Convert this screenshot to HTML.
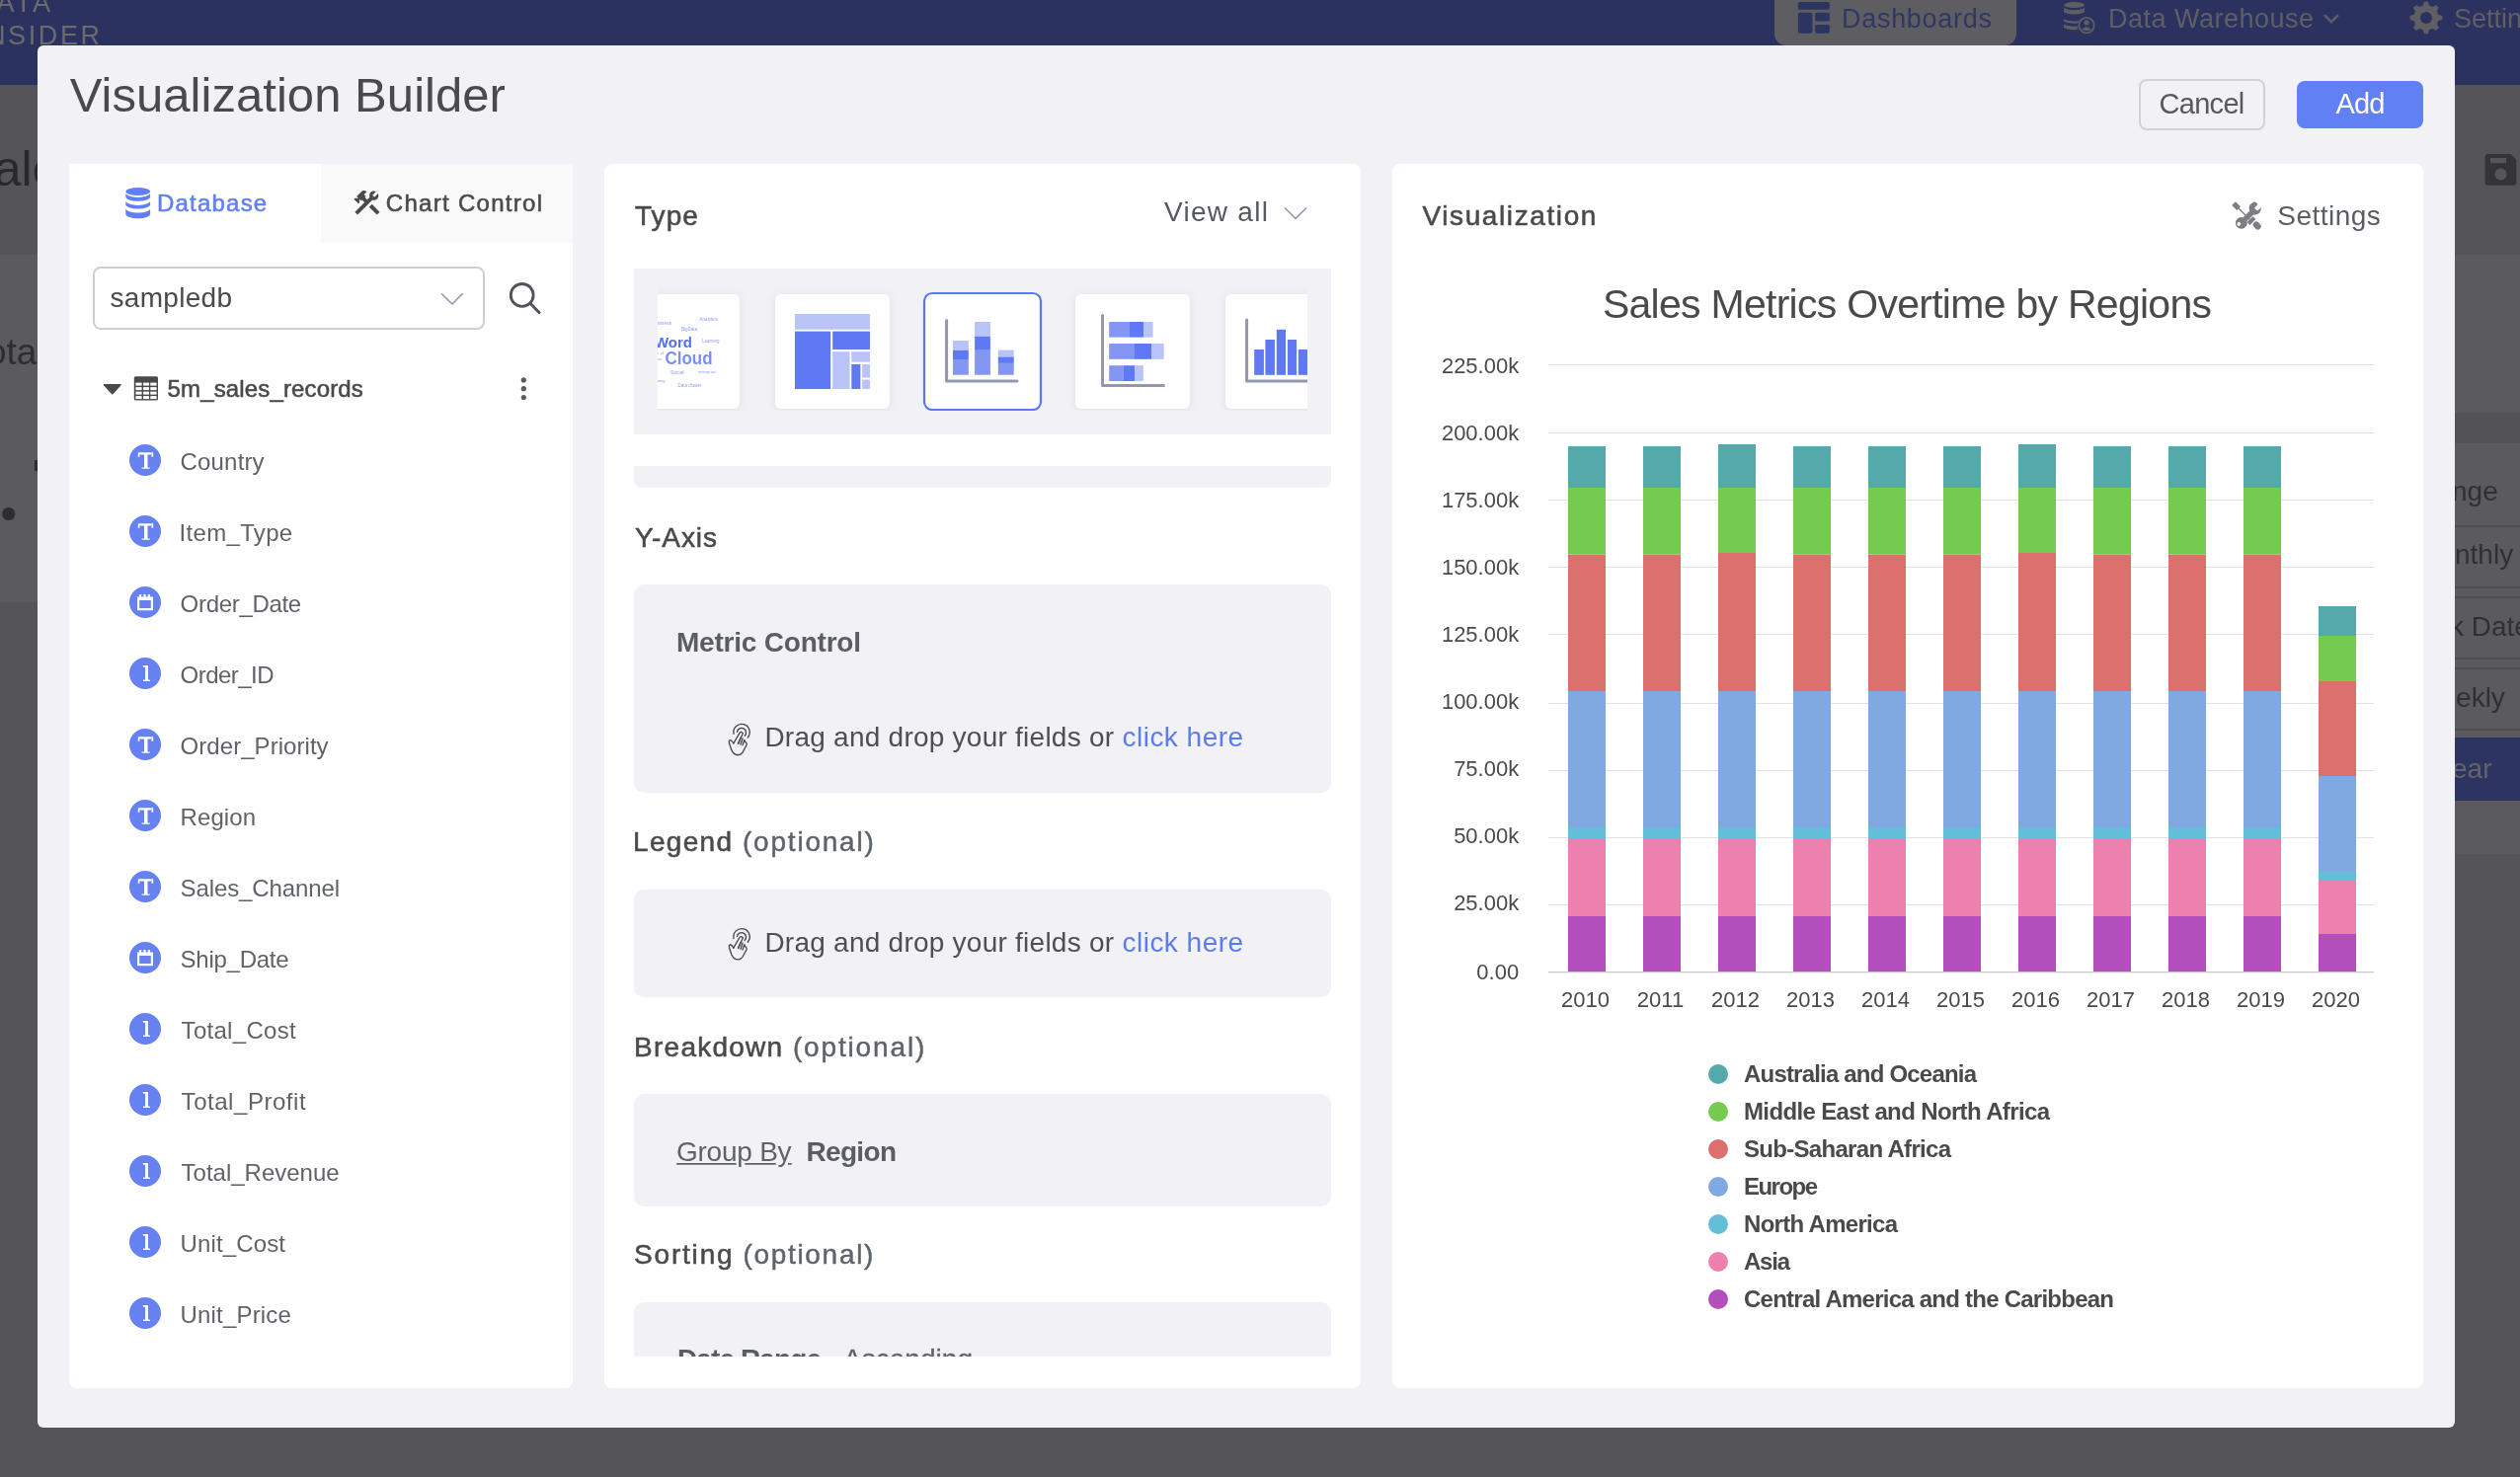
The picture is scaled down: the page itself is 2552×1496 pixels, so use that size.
<!DOCTYPE html>
<html><head><meta charset="utf-8"><title>Visualization Builder</title>
<style>
html,body{margin:0;padding:0;}
body{width:2552px;height:1496px;position:relative;overflow:hidden;background:#59585d;font-family:"Liberation Sans",sans-serif;}
svg text{font-family:"Liberation Sans",sans-serif;}
</style></head><body>
<div style="position:absolute;left:0px;top:86px;width:2552px;height:1410px;background:#555459;border-radius:0px;"></div>
<div style="position:absolute;left:0px;top:258px;width:38px;height:352px;background:#5b5a5f;border-radius:0px;"></div>
<div style="position:absolute;left:2486px;top:258px;width:66px;height:607px;background:#5b5a5f;border-radius:0px;"></div>
<div style="position:absolute;left:2486px;top:418px;width:66px;height:31px;background:#535257;border-radius:0px;"></div>
<div style="position:absolute;left:0px;top:1446px;width:2552px;height:50px;background:#545358;border-radius:0px;"></div>
<div style="position:absolute;left:0px;top:0px;width:2552px;height:86px;background:#2b3260;border-radius:0px;"></div>
<div style="position:absolute;left:1797px;top:-20px;width:245px;height:66px;background:#5e5e62;border-radius:12px;"></div>
<div style="position:absolute;left:2486px;top:532px;width:66px;height:2px;background:#4f4e53;border-radius:0px;"></div>
<div style="position:absolute;left:2486px;top:594px;width:66px;height:2px;background:#4f4e53;border-radius:0px;"></div>
<div style="position:absolute;left:2486px;top:604px;width:66px;height:2px;background:#4f4e53;border-radius:0px;"></div>
<div style="position:absolute;left:2486px;top:666px;width:66px;height:2px;background:#4f4e53;border-radius:0px;"></div>
<div style="position:absolute;left:2486px;top:676px;width:66px;height:2px;background:#4f4e53;border-radius:0px;"></div>
<div style="position:absolute;left:2486px;top:738px;width:66px;height:2px;background:#4f4e53;border-radius:0px;"></div>
<div style="position:absolute;left:2486px;top:747px;width:66px;height:64px;background:#2d3461;border-radius:0px;"></div>
<svg width="2552" height="1496" style="position:absolute;left:0;top:0;will-change:transform"><text x="-39.6" y="188" font-size="50" fill="#29292c" >Sales</text>
<text x="-14" y="369" font-size="37" fill="#2e2e30" >ota</text>
<text x="2483" y="507" font-size="28" fill="#2f3033" >nge</text>
<text x="2486" y="571" font-size="28" fill="#2f3033" >nthly</text>
<text x="2481" y="644" font-size="28" fill="#2f3033" >k Date</text>
<text x="2471.5" y="716" font-size="28" fill="#2f3033" >eekly</text>
<text x="2483" y="788" font-size="28" fill="#64646a" >ear</text>
<circle cx="8.7" cy="520.5" r="6.6" fill="#2e2e30"/>
<rect x="35" y="466" width="3" height="11" fill="#2e2e30"/>
<path d="M2519.6 156 H2542.6 L2548.3 161.7 V184.8 Q2548.3 187.8 2545.3 187.8 H2519.6 Q2516.6 187.8 2516.6 184.8 V159 Q2516.6 156 2519.6 156Z" fill="#333338"/>
<rect x="2521.9" y="160" width="16.1" height="5.2" fill="#56555a"/>
<circle cx="2532.5" cy="176.6" r="6" fill="#56555a"/></svg>
<div style="position:absolute;left:38px;top:46px;width:2448px;height:1400px;background:#f2f1f6;border-radius:6px;"></div>
<div style="position:absolute;left:70px;top:166px;width:510px;height:1240px;background:#ffffff;border-radius:0px;border-radius:0 0 8px 8px;"></div>
<div style="position:absolute;left:325px;top:166px;width:255px;height:80px;background:#f9f9fa;border-radius:0px;"></div>
<div style="position:absolute;left:94px;top:270px;width:397px;height:64px;background:#ffffff;border-radius:8px;box-sizing:border-box;border:2px solid #cfcfd1;"></div>
<div style="position:absolute;left:2166px;top:80px;width:128px;height:52px;background:transparent;border-radius:8px;box-sizing:border-box;border:2px solid #d2d2d2;"></div>
<div style="position:absolute;left:2326px;top:82px;width:128px;height:48px;background:#6080f4;border-radius:8px;"></div>
<div style="position:absolute;left:612px;top:166px;width:766px;height:1240px;background:#ffffff;border-radius:8px;"></div>
<div style="position:absolute;left:642px;top:272px;width:706px;height:168px;background:#f2f1f6;border-radius:0px;"></div>
<div style="position:absolute;left:642px;top:472px;width:706px;height:22px;background:#f2f1f6;border-radius:0px;border-radius:0 0 8px 8px;"></div>
<div style="position:absolute;left:642px;top:592px;width:706px;height:211px;background:#f2f1f6;border-radius:10px;"></div>
<div style="position:absolute;left:642px;top:901px;width:706px;height:109px;background:#f2f1f6;border-radius:10px;"></div>
<div style="position:absolute;left:642px;top:1108px;width:706px;height:114px;background:#f2f1f6;border-radius:10px;"></div>
<div style="position:absolute;left:642px;top:1319px;width:706px;height:55px;background:#f2f1f6;border-radius:0px;border-radius:10px 10px 0 0;"></div>
<div style="position:absolute;left:1410px;top:166px;width:1044px;height:1240px;background:#ffffff;border-radius:8px;"></div>
<svg width="2552" height="1496" viewBox="0 0 2552 1496" style="position:absolute;left:0;top:0;will-change:transform">
<text x="-26" y="12" font-size="27" fill="#6b6b6e" letter-spacing="3">DATA</text>
<text x="-14" y="45" font-size="27" fill="#6b6b6e" letter-spacing="2.6">NSIDER</text>
<text x="1865" y="28" font-size="27" fill="#2f3766" textLength="152" lengthAdjust="spacing" >Dashboards</text>
<text x="2135" y="28" font-size="27" fill="#5f5f63" textLength="208" lengthAdjust="spacing" >Data Warehouse</text>
<text x="2485" y="28" font-size="27" fill="#5f5f63" >Settings</text>
<text id="title" x="70.7" y="113" font-size="49" fill="#4a4a4a" textLength="441.2" lengthAdjust="spacing" >Visualization Builder</text>
<text id="cancel" x="2186.5" y="115" font-size="29" fill="#55585d" textLength="86.8" lengthAdjust="spacing" >Cancel</text>
<text id="add" x="2365.4" y="115" font-size="29" fill="#ffffff" textLength="50.1" lengthAdjust="spacing" >Add</text>
<text id="database" x="158.9" y="214" font-size="24" fill="#6380f0" textLength="111.3" lengthAdjust="spacing" stroke="#6380f0" stroke-width="0.55" >Database</text>
<text id="chartctl" x="390.8" y="214" font-size="24" fill="#4a4a4a" textLength="158.2" lengthAdjust="spacing" stroke="#4a4a4a" stroke-width="0.55" >Chart Control</text>
<text id="sampledb" x="111.5" y="311" font-size="28" fill="#4a4a4a" textLength="123.5" lengthAdjust="spacing" >sampledb</text>
<text id="tablename" x="169.5" y="402" font-size="24" fill="#4a4a4a" textLength="198.3" lengthAdjust="spacing" stroke="#4a4a4a" stroke-width="0.55" >5m_sales_records</text>
<text id="f_Country" x="182.6" y="476" font-size="24" fill="#5f6368" textLength="85.0" lengthAdjust="spacing" >Country</text>
<text id="f_Item_Type" x="181.6" y="548" font-size="24" fill="#5f6368" textLength="114.6" lengthAdjust="spacing" >Item_Type</text>
<text id="f_Order_Date" x="182.6" y="620" font-size="24" fill="#5f6368" textLength="122.6" lengthAdjust="spacing" >Order_Date</text>
<text id="f_Order_ID" x="182.6" y="692" font-size="24" fill="#5f6368" textLength="95.0" lengthAdjust="spacing" >Order_ID</text>
<text id="f_Order_Priority" x="182.6" y="764" font-size="24" fill="#5f6368" textLength="150.0" lengthAdjust="spacing" >Order_Priority</text>
<text id="f_Region" x="182.6" y="836" font-size="24" fill="#5f6368" textLength="76.4" lengthAdjust="spacing" >Region</text>
<text id="f_Sales_Channel" x="182.6" y="908" font-size="24" fill="#5f6368" textLength="161.4" lengthAdjust="spacing" >Sales_Channel</text>
<text id="f_Ship_Date" x="182.6" y="980" font-size="24" fill="#5f6368" textLength="110.0" lengthAdjust="spacing" >Ship_Date</text>
<text id="f_Total_Cost" x="183.6" y="1052" font-size="24" fill="#5f6368" textLength="116.0" lengthAdjust="spacing" >Total_Cost</text>
<text id="f_Total_Profit" x="183.6" y="1124" font-size="24" fill="#5f6368" textLength="126.0" lengthAdjust="spacing" >Total_Profit</text>
<text id="f_Total_Revenue" x="183.6" y="1196" font-size="24" fill="#5f6368" textLength="160.0" lengthAdjust="spacing" >Total_Revenue</text>
<text id="f_Unit_Cost" x="182.6" y="1268" font-size="24" fill="#5f6368" textLength="106.4" lengthAdjust="spacing" >Unit_Cost</text>
<text id="f_Unit_Price" x="182.6" y="1340" font-size="24" fill="#5f6368" textLength="112.2" lengthAdjust="spacing" >Unit_Price</text>
<text id="type" x="643.0" y="228" font-size="28" fill="#4a4a4a" textLength="63.9" lengthAdjust="spacing" stroke="#4a4a4a" stroke-width="0.55" >Type</text>
<text id="viewall" x="1179.0" y="224" font-size="28" fill="#55585e" textLength="104.9" lengthAdjust="spacing" >View all</text>
<text id="yaxis" x="643.0" y="553.5" font-size="28" fill="#4a4a4a" textLength="83.0" lengthAdjust="spacing" stroke="#4a4a4a" stroke-width="0.55" >Y-Axis</text>
<text id="metric" x="685.0" y="660" font-size="28" fill="#5a5d63" font-weight="700" textLength="187.0" lengthAdjust="spacing" >Metric Control</text>
<text id="drag0" x="774.4" y="756.4" font-size="28" fill="#4f4f4f" textLength="353.7" lengthAdjust="spacing" >Drag and drop your fields or</text>
<text id="click0" x="1136.5" y="756.4" font-size="28" fill="#5b7cf0" textLength="122.6" lengthAdjust="spacing" >click here</text>
<text id="drag1" x="774.4" y="963.6" font-size="28" fill="#4f4f4f" textLength="353.7" lengthAdjust="spacing" >Drag and drop your fields or</text>
<text id="click1" x="1136.5" y="963.6" font-size="28" fill="#5b7cf0" textLength="122.6" lengthAdjust="spacing" >click here</text>
<text id="legend" x="641.0" y="862" font-size="28" fill="#4a4a4a" textLength="100.0" lengthAdjust="spacing" stroke="#4a4a4a" stroke-width="0.55" >Legend</text>
<text id="legopt" x="752.0" y="862" font-size="28" fill="#5f6368" textLength="132.8" lengthAdjust="spacing" stroke="#5f6368" stroke-width="0.45" >(optional)</text>
<text id="breakdown" x="642.1" y="1069.5" font-size="28" fill="#4a4a4a" textLength="150.0" lengthAdjust="spacing" stroke="#4a4a4a" stroke-width="0.55" >Breakdown</text>
<text id="bdopt" x="802.9" y="1069.5" font-size="28" fill="#5f6368" textLength="133.4" lengthAdjust="spacing" stroke="#5f6368" stroke-width="0.45" >(optional)</text>
<text id="groupby" x="685.0" y="1175.7" font-size="28" fill="#5f6368" textLength="116.6" lengthAdjust="spacing" >Group By</text>
<path d="M685.2 1178.1 H745.7 V1179.7 H685.2Z M754.3 1178.1 H785.7 V1179.7 H754.3Z M798 1178.1 H801.7 V1179.7 H798Z" fill="#5f6368"/>
<text id="regionbd" x="816.4" y="1175.7" font-size="28" fill="#5a5d63" font-weight="700" textLength="91.6" lengthAdjust="spacing" >Region</text>
<text id="sorting" x="642.0" y="1280" font-size="28" fill="#4a4a4a" textLength="99.6" lengthAdjust="spacing" stroke="#4a4a4a" stroke-width="0.55" >Sorting</text>
<text id="sortopt" x="752.4" y="1280" font-size="28" fill="#5f6368" textLength="132.0" lengthAdjust="spacing" stroke="#5f6368" stroke-width="0.45" >(optional)</text>
<clipPath id="midclip"><rect x="612" y="166" width="766" height="1208"/></clipPath>
<g clip-path="url(#midclip)">
<text x="686" y="1386" font-size="28" fill="#5a5d63" font-weight="700" textLength="146" lengthAdjust="spacing" >Date Range</text>
<text x="854" y="1386" font-size="28" fill="#5f6368" textLength="131" lengthAdjust="spacing" stroke="#5f6368" stroke-width="0.3" >Ascending</text>
</g>
<text id="visualization" x="1440.5" y="228" font-size="28" fill="#4a4a4a" textLength="175.9" lengthAdjust="spacing" stroke="#4a4a4a" stroke-width="0.55" >Visualization</text>
<text id="settings" x="2306.3" y="228" font-size="28" fill="#5a5d63" textLength="104.5" lengthAdjust="spacing" >Settings</text>
<text id="charttitle" x="1622.9" y="322" font-size="41" fill="#4a4a4a" textLength="617.1" lengthAdjust="spacing" >Sales Metrics Overtime by Regions</text>
<rect x="1568" y="984" width="836" height="1" fill="#cbcbcb"/>
<rect x="1568" y="985" width="836" height="0.6" fill="#e6e6e6"/>
<text x="1538.2" y="991.8" font-size="22" fill="#4a4a4a" text-anchor="end" >0.00</text>
<rect x="1568" y="916" width="836" height="1" fill="#e1e1e1"/>
<text x="1538.2" y="922.1" font-size="22" fill="#4a4a4a" text-anchor="end" >25.00k</text>
<rect x="1568" y="848" width="836" height="1" fill="#e1e1e1"/>
<text x="1538.2" y="853.9" font-size="22" fill="#4a4a4a" text-anchor="end" >50.00k</text>
<rect x="1568" y="780" width="836" height="1" fill="#e1e1e1"/>
<text x="1538.2" y="786" font-size="22" fill="#4a4a4a" text-anchor="end" >75.00k</text>
<rect x="1568" y="712" width="836" height="1" fill="#e1e1e1"/>
<text x="1538.2" y="718" font-size="22" fill="#4a4a4a" text-anchor="end" >100.00k</text>
<rect x="1568" y="642" width="836" height="1" fill="#e1e1e1"/>
<text x="1538.2" y="649.7" font-size="22" fill="#4a4a4a" text-anchor="end" >125.00k</text>
<rect x="1568" y="574" width="836" height="1" fill="#e1e1e1"/>
<text x="1538.2" y="581.9" font-size="22" fill="#4a4a4a" text-anchor="end" >150.00k</text>
<rect x="1568" y="506" width="836" height="1" fill="#e1e1e1"/>
<text x="1538.2" y="514" font-size="22" fill="#4a4a4a" text-anchor="end" >175.00k</text>
<rect x="1568" y="438" width="836" height="1" fill="#e1e1e1"/>
<text x="1538.2" y="446" font-size="22" fill="#4a4a4a" text-anchor="end" >200.00k</text>
<rect x="1568" y="369" width="836" height="1" fill="#e1e1e1"/>
<text x="1538.2" y="377.9" font-size="22" fill="#4a4a4a" text-anchor="end" >225.00k</text>
<rect x="1588" y="928" width="38" height="56.0" fill="#b24fbd"/>
<rect x="1588" y="850" width="38" height="78.0" fill="#ee80ae"/>
<rect x="1588" y="838" width="38" height="12.0" fill="#63bfd8"/>
<rect x="1588" y="700" width="38" height="138.0" fill="#80a9e1"/>
<rect x="1588" y="561.5" width="38" height="138.5" fill="#db706c"/>
<rect x="1588" y="494" width="38" height="67.5" fill="#74cb50"/>
<rect x="1588" y="452" width="38" height="42.0" fill="#55a9aa"/>
<text x="1605.5" y="1020" font-size="22" fill="#4a4a4a" text-anchor="middle" >2010</text>
<rect x="1664" y="928" width="38" height="56.0" fill="#b24fbd"/>
<rect x="1664" y="850" width="38" height="78.0" fill="#ee80ae"/>
<rect x="1664" y="838" width="38" height="12.0" fill="#63bfd8"/>
<rect x="1664" y="700" width="38" height="138.0" fill="#80a9e1"/>
<rect x="1664" y="561.5" width="38" height="138.5" fill="#db706c"/>
<rect x="1664" y="494" width="38" height="67.5" fill="#74cb50"/>
<rect x="1664" y="452" width="38" height="42.0" fill="#55a9aa"/>
<text x="1681.5" y="1020" font-size="22" fill="#4a4a4a" text-anchor="middle" >2011</text>
<rect x="1740" y="928" width="38" height="56.0" fill="#b24fbd"/>
<rect x="1740" y="850" width="38" height="78.0" fill="#ee80ae"/>
<rect x="1740" y="838" width="38" height="12.0" fill="#63bfd8"/>
<rect x="1740" y="700" width="38" height="138.0" fill="#80a9e1"/>
<rect x="1740" y="560" width="38" height="140.0" fill="#db706c"/>
<rect x="1740" y="494" width="38" height="66.0" fill="#74cb50"/>
<rect x="1740" y="450" width="38" height="44.0" fill="#55a9aa"/>
<text x="1757.5" y="1020" font-size="22" fill="#4a4a4a" text-anchor="middle" >2012</text>
<rect x="1816" y="928" width="38" height="56.0" fill="#b24fbd"/>
<rect x="1816" y="850" width="38" height="78.0" fill="#ee80ae"/>
<rect x="1816" y="838" width="38" height="12.0" fill="#63bfd8"/>
<rect x="1816" y="700" width="38" height="138.0" fill="#80a9e1"/>
<rect x="1816" y="561.5" width="38" height="138.5" fill="#db706c"/>
<rect x="1816" y="494" width="38" height="67.5" fill="#74cb50"/>
<rect x="1816" y="452" width="38" height="42.0" fill="#55a9aa"/>
<text x="1833.5" y="1020" font-size="22" fill="#4a4a4a" text-anchor="middle" >2013</text>
<rect x="1892" y="928" width="38" height="56.0" fill="#b24fbd"/>
<rect x="1892" y="850" width="38" height="78.0" fill="#ee80ae"/>
<rect x="1892" y="838" width="38" height="12.0" fill="#63bfd8"/>
<rect x="1892" y="700" width="38" height="138.0" fill="#80a9e1"/>
<rect x="1892" y="561.5" width="38" height="138.5" fill="#db706c"/>
<rect x="1892" y="494" width="38" height="67.5" fill="#74cb50"/>
<rect x="1892" y="452" width="38" height="42.0" fill="#55a9aa"/>
<text x="1909.5" y="1020" font-size="22" fill="#4a4a4a" text-anchor="middle" >2014</text>
<rect x="1968" y="928" width="38" height="56.0" fill="#b24fbd"/>
<rect x="1968" y="850" width="38" height="78.0" fill="#ee80ae"/>
<rect x="1968" y="838" width="38" height="12.0" fill="#63bfd8"/>
<rect x="1968" y="700" width="38" height="138.0" fill="#80a9e1"/>
<rect x="1968" y="561.5" width="38" height="138.5" fill="#db706c"/>
<rect x="1968" y="494" width="38" height="67.5" fill="#74cb50"/>
<rect x="1968" y="452" width="38" height="42.0" fill="#55a9aa"/>
<text x="1985.5" y="1020" font-size="22" fill="#4a4a4a" text-anchor="middle" >2015</text>
<rect x="2044" y="928" width="38" height="56.0" fill="#b24fbd"/>
<rect x="2044" y="850" width="38" height="78.0" fill="#ee80ae"/>
<rect x="2044" y="838" width="38" height="12.0" fill="#63bfd8"/>
<rect x="2044" y="700" width="38" height="138.0" fill="#80a9e1"/>
<rect x="2044" y="560" width="38" height="140.0" fill="#db706c"/>
<rect x="2044" y="494" width="38" height="66.0" fill="#74cb50"/>
<rect x="2044" y="450" width="38" height="44.0" fill="#55a9aa"/>
<text x="2061.5" y="1020" font-size="22" fill="#4a4a4a" text-anchor="middle" >2016</text>
<rect x="2120" y="928" width="38" height="56.0" fill="#b24fbd"/>
<rect x="2120" y="850" width="38" height="78.0" fill="#ee80ae"/>
<rect x="2120" y="838" width="38" height="12.0" fill="#63bfd8"/>
<rect x="2120" y="700" width="38" height="138.0" fill="#80a9e1"/>
<rect x="2120" y="561.5" width="38" height="138.5" fill="#db706c"/>
<rect x="2120" y="494" width="38" height="67.5" fill="#74cb50"/>
<rect x="2120" y="452" width="38" height="42.0" fill="#55a9aa"/>
<text x="2137.5" y="1020" font-size="22" fill="#4a4a4a" text-anchor="middle" >2017</text>
<rect x="2196" y="928" width="38" height="56.0" fill="#b24fbd"/>
<rect x="2196" y="850" width="38" height="78.0" fill="#ee80ae"/>
<rect x="2196" y="838" width="38" height="12.0" fill="#63bfd8"/>
<rect x="2196" y="700" width="38" height="138.0" fill="#80a9e1"/>
<rect x="2196" y="561.5" width="38" height="138.5" fill="#db706c"/>
<rect x="2196" y="494" width="38" height="67.5" fill="#74cb50"/>
<rect x="2196" y="452" width="38" height="42.0" fill="#55a9aa"/>
<text x="2213.5" y="1020" font-size="22" fill="#4a4a4a" text-anchor="middle" >2018</text>
<rect x="2272" y="928" width="38" height="56.0" fill="#b24fbd"/>
<rect x="2272" y="850" width="38" height="78.0" fill="#ee80ae"/>
<rect x="2272" y="838" width="38" height="12.0" fill="#63bfd8"/>
<rect x="2272" y="700" width="38" height="138.0" fill="#80a9e1"/>
<rect x="2272" y="561.5" width="38" height="138.5" fill="#db706c"/>
<rect x="2272" y="494" width="38" height="67.5" fill="#74cb50"/>
<rect x="2272" y="452" width="38" height="42.0" fill="#55a9aa"/>
<text x="2289.5" y="1020" font-size="22" fill="#4a4a4a" text-anchor="middle" >2019</text>
<rect x="2348" y="946" width="38" height="38.0" fill="#b24fbd"/>
<rect x="2348" y="892" width="38" height="54.0" fill="#ee80ae"/>
<rect x="2348" y="883" width="38" height="9.0" fill="#63bfd8"/>
<rect x="2348" y="786" width="38" height="97.0" fill="#80a9e1"/>
<rect x="2348" y="690" width="38" height="96.0" fill="#db706c"/>
<rect x="2348" y="644" width="38" height="46.0" fill="#74cb50"/>
<rect x="2348" y="614" width="38" height="30.0" fill="#55a9aa"/>
<text x="2365.5" y="1020" font-size="22" fill="#4a4a4a" text-anchor="middle" >2020</text>
<circle cx="1740" cy="1088" r="10" fill="#55a9aa"/>
<text x="1766" y="1095.5" font-size="24" fill="#4a4a4a" font-weight="700" textLength="236" lengthAdjust="spacing" >Australia and Oceania</text>
<circle cx="1740" cy="1126" r="10" fill="#74cb50"/>
<text x="1766" y="1133.5" font-size="24" fill="#4a4a4a" font-weight="700" textLength="310" lengthAdjust="spacing" >Middle East and North Africa</text>
<circle cx="1740" cy="1164" r="10" fill="#db706c"/>
<text x="1766" y="1171.5" font-size="24" fill="#4a4a4a" font-weight="700" textLength="210" lengthAdjust="spacing" >Sub-Saharan Africa</text>
<circle cx="1740" cy="1202" r="10" fill="#80a9e1"/>
<text x="1766" y="1209.5" font-size="24" fill="#4a4a4a" font-weight="700" textLength="75" lengthAdjust="spacing" >Europe</text>
<circle cx="1740" cy="1240" r="10" fill="#63bfd8"/>
<text x="1766" y="1247.5" font-size="24" fill="#4a4a4a" font-weight="700" textLength="156" lengthAdjust="spacing" >North America</text>
<circle cx="1740" cy="1278" r="10" fill="#ee80ae"/>
<text x="1766" y="1285.5" font-size="24" fill="#4a4a4a" font-weight="700" textLength="47" lengthAdjust="spacing" >Asia</text>
<circle cx="1740" cy="1316" r="10" fill="#b24fbd"/>
<text x="1766" y="1323.5" font-size="24" fill="#4a4a4a" font-weight="700" textLength="375" lengthAdjust="spacing" >Central America and the Caribbean</text>
<g transform="translate(127.3,190)" fill="#6080f3">
<ellipse cx="12.4" cy="4" rx="12.4" ry="4"/>
<path d="M0 5.3 V9.5 A12.4 4.2 0 0 0 24.8 9.5 V5.3 A12.4 4.6 0 0 1 0 5.3Z"/>
<path d="M0 13.3 V17.3 A12.4 4.2 0 0 0 24.8 17.3 V13.3 A12.4 4.6 0 0 1 0 13.3Z"/>
<path d="M0 21.0 V27 A12.4 4.2 0 0 0 24.8 27 V21.0 A12.4 4.6 0 0 1 0 21.0Z"/>
</g>
<g transform="translate(355.6,189.6) scale(1.32)" fill="#4a4a4a"><path d="M13.783 15.172l2.121-2.121 5.996 5.996-2.121 2.121zM17.5 10c1.93 0 3.5-1.57 3.5-3.5 0-.58-.16-1.12-.41-1.6l-2.7 2.7-1.49-1.49 2.7-2.7c-.48-.25-1.02-.41-1.6-.41C15.57 3 14 4.57 14 6.5c0 .41.08.8.21 1.160l-1.85 1.85-1.78-1.78.71-.71-1.410-1.41L12 3.49c-1.17-1.17-3.07-1.17-4.24 0L4.22 7.03l1.41 1.41H2.81l-.71.71 3.54 3.54.71-.71V9.15l1.41 1.41.71-.71 1.78 1.78-7.41 7.41 2.12 2.12L16.34 9.79c.36.13.75.21 1.16.21z"/></g>
<path d="M447.6 297.8 L458 308 L468.2 297.6" fill="none" stroke="#9a9cb4" stroke-width="1.7" stroke-linecap="round" stroke-linejoin="round"/>
<circle cx="528.7" cy="298.9" r="11.4" fill="none" stroke="#50535a" stroke-width="2.8"/>
<path d="M537.4 307.8 L546 316.6" stroke="#50535a" stroke-width="2.9" stroke-linecap="round"/>
<path d="M105.5 389.7 H122 L113.75 398.6Z" fill="#4a4a4a" stroke="#4a4a4a" stroke-width="1.6" stroke-linejoin="round"/>
<rect x="135.8" y="381.3" width="24.2" height="24.2" rx="1.5" fill="#4a4a4a"/>
<rect x="137.4" y="387.6" width="6.2" height="3.0" fill="#ffffff"/>
<rect x="137.4" y="392.1" width="6.2" height="3.0" fill="#ffffff"/>
<rect x="137.4" y="396.6" width="6.2" height="3.0" fill="#ffffff"/>
<rect x="137.4" y="401.1" width="6.2" height="3.0" fill="#ffffff"/>
<rect x="145.1" y="387.6" width="5.9" height="3.0" fill="#ffffff"/>
<rect x="145.1" y="392.1" width="5.9" height="3.0" fill="#ffffff"/>
<rect x="145.1" y="396.6" width="5.9" height="3.0" fill="#ffffff"/>
<rect x="145.1" y="401.1" width="5.9" height="3.0" fill="#ffffff"/>
<rect x="152.3" y="387.6" width="6.3" height="3.0" fill="#ffffff"/>
<rect x="152.3" y="392.1" width="6.3" height="3.0" fill="#ffffff"/>
<rect x="152.3" y="396.6" width="6.3" height="3.0" fill="#ffffff"/>
<rect x="152.3" y="401.1" width="6.3" height="3.0" fill="#ffffff"/>
<circle cx="530.3" cy="384.9" r="2.6" fill="#5a5d63"/>
<circle cx="530.3" cy="393.7" r="2.6" fill="#5a5d63"/>
<circle cx="530.3" cy="402.5" r="2.6" fill="#5a5d63"/>
<circle cx="147" cy="466" r="16" fill="#6681f2"/>
<path fill="#ffffff" d="M139.8 458.3 H155.2 V462.8 H153.6 V460.4 H149.5 V473.4 H151.7 V474.8 H143.6 V473.4 H146 V460.4 H141.4 V462.8 H139.8Z"/>
<circle cx="147" cy="538" r="16" fill="#6681f2"/>
<path fill="#ffffff" d="M139.8 530.3 H155.2 V534.8 H153.6 V532.4 H149.5 V545.4 H151.7 V546.8 H143.6 V545.4 H146 V532.4 H141.4 V534.8 H139.8Z"/>
<circle cx="147" cy="610" r="16" fill="#6681f2"/>
<path fill="#ffffff" fill-rule="evenodd" d="M139 604.4 H141 V601.9 H143.2 V604.4 H145.4 V601.9 H147.6 V604.4 H149.8 V601.9 H152 V604.4 H155 V617.5 Q155 618.3 154.2 618.3 H139.8 Q139 618.3 139 617.5Z M141.2 608 V616 H152.8 V608Z"/>
<circle cx="147" cy="682" r="16" fill="#6681f2"/>
<path fill="#ffffff" d="M144.8 674 H150 V688.4 H151.8 V690 H145 V688.4 H147 V675.7 H144.8Z"/>
<circle cx="147" cy="754" r="16" fill="#6681f2"/>
<path fill="#ffffff" d="M139.8 746.3 H155.2 V750.8 H153.6 V748.4 H149.5 V761.4 H151.7 V762.8 H143.6 V761.4 H146 V748.4 H141.4 V750.8 H139.8Z"/>
<circle cx="147" cy="826" r="16" fill="#6681f2"/>
<path fill="#ffffff" d="M139.8 818.3 H155.2 V822.8 H153.6 V820.4 H149.5 V833.4 H151.7 V834.8 H143.6 V833.4 H146 V820.4 H141.4 V822.8 H139.8Z"/>
<circle cx="147" cy="898" r="16" fill="#6681f2"/>
<path fill="#ffffff" d="M139.8 890.3 H155.2 V894.8 H153.6 V892.4 H149.5 V905.4 H151.7 V906.8 H143.6 V905.4 H146 V892.4 H141.4 V894.8 H139.8Z"/>
<circle cx="147" cy="970" r="16" fill="#6681f2"/>
<path fill="#ffffff" fill-rule="evenodd" d="M139 964.4 H141 V961.9 H143.2 V964.4 H145.4 V961.9 H147.6 V964.4 H149.8 V961.9 H152 V964.4 H155 V977.5 Q155 978.3 154.2 978.3 H139.8 Q139 978.3 139 977.5Z M141.2 968 V976 H152.8 V968Z"/>
<circle cx="147" cy="1042" r="16" fill="#6681f2"/>
<path fill="#ffffff" d="M144.8 1034 H150 V1048.4 H151.8 V1050 H145 V1048.4 H147 V1035.7 H144.8Z"/>
<circle cx="147" cy="1114" r="16" fill="#6681f2"/>
<path fill="#ffffff" d="M144.8 1106 H150 V1120.4 H151.8 V1122 H145 V1120.4 H147 V1107.7 H144.8Z"/>
<circle cx="147" cy="1186" r="16" fill="#6681f2"/>
<path fill="#ffffff" d="M144.8 1178 H150 V1192.4 H151.8 V1194 H145 V1192.4 H147 V1179.7 H144.8Z"/>
<circle cx="147" cy="1258" r="16" fill="#6681f2"/>
<path fill="#ffffff" d="M144.8 1250 H150 V1264.4 H151.8 V1266 H145 V1264.4 H147 V1251.7 H144.8Z"/>
<circle cx="147" cy="1330" r="16" fill="#6681f2"/>
<path fill="#ffffff" d="M144.8 1322 H150 V1336.4 H151.8 V1338 H145 V1336.4 H147 V1323.7 H144.8Z"/>
<clipPath id="cardclip"><rect x="666" y="280" width="658" height="136"/></clipPath>
<defs><filter id="cshadow" x="-20%" y="-20%" width="140%" height="140%"><feDropShadow dx="0" dy="1" stdDeviation="4.5" flood-color="#000" flood-opacity="0.07"/></filter></defs>
<g clip-path="url(#cardclip)">
<rect x="633" y="298" width="116" height="116" rx="6" fill="#ffffff" filter="url(#cshadow)"/>
<rect x="785" y="298" width="116" height="116" rx="6" fill="#ffffff" filter="url(#cshadow)"/>
<rect x="1089" y="298" width="116" height="116" rx="6" fill="#ffffff" filter="url(#cshadow)"/>
<rect x="1241" y="298" width="116" height="116" rx="6" fill="#ffffff" filter="url(#cshadow)"/>
<rect x="936" y="297" width="118" height="118" rx="8" fill="#ffffff" stroke="#5a78f5" stroke-width="2.2"/>
<text x="701" y="352" font-size="15" font-weight="700" fill="#5470f0" text-anchor="end">Word</text>
<text x="673.5" y="369" font-size="19" font-weight="700" fill="#7a90f0" textLength="48" lengthAdjust="spacingAndGlyphs">Cloud</text>
<text x="666" y="328.5" font-size="5" fill="#8a9cf2">siness</text>
<text x="708.5" y="325" font-size="4.6" fill="#8a9cf2">Analytics</text>
<text x="690" y="335" font-size="4.5" fill="#8a9cf2">BigData</text>
<text x="711" y="346.5" font-size="4.5" fill="#8a9cf2">Learning</text>
<text x="666" y="359" font-size="4" fill="#8a9cf2">r of</text>
<text x="666" y="365" font-size="4" fill="#8a9cf2">on</text>
<text x="679" y="379" font-size="5" fill="#8a9cf2">Social</text>
<text x="707" y="378" font-size="4" fill="#8a9cf2">enterprise</text>
<text x="666" y="387" font-size="4" fill="#8a9cf2">ning</text>
<text x="686.5" y="391.5" font-size="4.5" fill="#8a9cf2">Data cluster</text>
<rect x="805" y="318" width="76.0" height="15.7" fill="#b9c3f7"/>
<rect x="805" y="335.6" width="36.1" height="58.4" fill="#5f78f3"/>
<rect x="843.2" y="335.6" width="37.8" height="18.4" fill="#5f78f3"/>
<rect x="843.2" y="356.2" width="17.3" height="37.8" fill="#b9c3f7"/>
<rect x="862.3" y="356.2" width="18.7" height="10.5" fill="#b9c3f7"/>
<rect x="862.3" y="369" width="9.0" height="25.0" fill="#5f78f3"/>
<rect x="873.2" y="369" width="7.8" height="13.5" fill="#b9c3f7"/>
<rect x="873.2" y="384.6" width="7.8" height="9.4" fill="#b9c3f7"/>
<path d="M958.6 324.5 V386 H1030" fill="none" stroke="#9498ac" stroke-width="3" stroke-linecap="round" stroke-linejoin="round"/>
<rect x="965" y="345" width="15.8" height="9.8" fill="#b9c3f7"/>
<rect x="965" y="354.8" width="15.8" height="9.2" fill="#5f78f3"/>
<rect x="965" y="364" width="15.8" height="15.7" fill="#8396f3"/>
<rect x="987.1" y="326" width="15.8" height="14.8" fill="#b9c3f7"/>
<rect x="987.1" y="340.8" width="15.8" height="14.0" fill="#5f78f3"/>
<rect x="987.1" y="354.8" width="15.8" height="24.9" fill="#8396f3"/>
<rect x="1010.8" y="354.6" width="15.9" height="6.9" fill="#b9c3f7"/>
<rect x="1010.8" y="361.5" width="15.9" height="6.4" fill="#5f78f3"/>
<rect x="1010.8" y="367.9" width="15.9" height="11.8" fill="#8396f3"/>
<path d="M1116.5 319.5 V390.5 H1178.5" fill="none" stroke="#9498ac" stroke-width="3" stroke-linecap="round" stroke-linejoin="round"/>
<rect x="1123.2" y="326" width="20.8" height="15.6" fill="#8396f3"/>
<rect x="1144" y="326" width="14.0" height="15.6" fill="#5f78f3"/>
<rect x="1158" y="326" width="9.6" height="15.6" fill="#b9c3f7"/>
<rect x="1123.2" y="348" width="25.8" height="15.8" fill="#8396f3"/>
<rect x="1149" y="348" width="17.0" height="15.8" fill="#5f78f3"/>
<rect x="1166" y="348" width="12.7" height="15.8" fill="#b9c3f7"/>
<rect x="1123.2" y="370.2" width="14.7" height="15.8" fill="#8396f3"/>
<rect x="1137.9" y="370.2" width="11.3" height="15.8" fill="#5f78f3"/>
<rect x="1149.2" y="370.2" width="8.6" height="15.8" fill="#b9c3f7"/>
<path d="M1262.6 324 V386 H1330" fill="none" stroke="#9498ac" stroke-width="3" stroke-linecap="round" stroke-linejoin="round"/>
<rect x="1270.2" y="354" width="9.7" height="25.8" fill="#5f78f3"/>
<rect x="1281.4" y="344" width="9.5" height="35.8" fill="#5f78f3"/>
<rect x="1292.8" y="333.8" width="9.2" height="46.0" fill="#5f78f3"/>
<rect x="1303.9" y="344" width="9.1" height="35.8" fill="#5f78f3"/>
<rect x="1314.8" y="354" width="9.2" height="25.8" fill="#5f78f3"/>
</g>
<path d="M1301.6 211 L1312.1 221.4 L1322.5 211" fill="none" stroke="#9a9cb4" stroke-width="1.7" stroke-linecap="round" stroke-linejoin="round"/>
<g transform="translate(737.6,733.4)" fill="none" stroke="#474747" stroke-width="1.35" stroke-linecap="round" stroke-linejoin="round">
<path d="M5.4 9.9 A8.2 8.2 0 1 1 19.6 13.6"/>
<path d="M8.8 7.9 A4.6 4.6 0 1 1 16.6 11.9"/>
<path d="M5.2 19.6 L11.4 8.9 Q13 6.9 14.8 9.4 L9.8 19.6"/>
<path d="M12.6 13.6 L10.2 19.9 M14.4 14.6 L12.4 20.6 M16.2 16.4 L14.4 21.4"/>
<path d="M5.2 19.6 Q3.4 16 1.6 16.2 Q0.3 16.8 0.9 19.4 L3.2 26.2 Q5.2 31.3 10 31.3 Q12.8 31.1 14.6 28.4 L18.4 21.2 Q19 19.6 17.8 18.6 Q17 18 16.2 16.4"/>
</g>
<g transform="translate(737.6,940.6)" fill="none" stroke="#474747" stroke-width="1.35" stroke-linecap="round" stroke-linejoin="round">
<path d="M5.4 9.9 A8.2 8.2 0 1 1 19.6 13.6"/>
<path d="M8.8 7.9 A4.6 4.6 0 1 1 16.6 11.9"/>
<path d="M5.2 19.6 L11.4 8.9 Q13 6.9 14.8 9.4 L9.8 19.6"/>
<path d="M12.6 13.6 L10.2 19.9 M14.4 14.6 L12.4 20.6 M16.2 16.4 L14.4 21.4"/>
<path d="M5.2 19.6 Q3.4 16 1.6 16.2 Q0.3 16.8 0.9 19.4 L3.2 26.2 Q5.2 31.3 10 31.3 Q12.8 31.1 14.6 28.4 L18.4 21.2 Q19 19.6 17.8 18.6 Q17 18 16.2 16.4"/>
</g>
<g fill="#7c7e84">
<rect x="-2.6" y="-3.6" width="5.2" height="7.2" transform="translate(2264.6,208.6) rotate(-45)"/>
<path d="M2266.5 210.5 L2279.5 223.5" stroke="#7c7e84" stroke-width="1.4"/>
<rect x="-4.2" y="-2.1" width="8.4" height="4.2" transform="translate(2280,223.6) rotate(-45)"/>
<rect x="-3.2" y="-4.2" width="6.4" height="8.6" rx="3" transform="translate(2285.6,228.4) rotate(-45)"/>
<path d="M2283.8 204.6 A6.2 6.2 0 0 0 2278.3 213.6 L2271.6 220.3 A5.9 5.9 0 1 0 2275.4 224.1 L2282.1 217.4 A6.2 6.2 0 0 0 2289.6 210.2 L2286.2 213.4 L2283.0 210.7 L2286.4 206.9 A6 6 0 0 0 2283.8 204.6Z"/>
<circle cx="2267.3" cy="226.8" r="1.9" fill="#ffffff"/>
</g>
<g fill="#2c3461">
<rect x="1820.9" y="2" width="32" height="7.7" rx="1.6"/>
<rect x="1820.9" y="12.8" width="14.5" height="20.9" rx="1.6"/>
<rect x="1838.2" y="12.8" width="14.7" height="8.8" rx="1.6"/>
<rect x="1838.2" y="25" width="14.7" height="8.7" rx="1.6"/>
</g>
<g fill="#5f5f63">
<ellipse cx="2100.5" cy="5" rx="10.5" ry="3"/>
<path d="M2090 7 V11.5 A10.5 3 0 0 0 2111 11.5 V7 A10.5 3.2 0 0 1 2090 7Z"/>
<path d="M2090 14 V18.5 A10.5 3 0 0 0 2106 21 L2104 23.5 A10.5 3 0 0 1 2090 21Z"/>
<path d="M2090 23.5 V27.5 A10.5 3 0 0 0 2103.5 30 L2104 26.5 A10.5 3 0 0 1 2090 23.5Z"/>
<circle cx="2113" cy="25.6" r="8.6"/>
</g>
<circle cx="2113" cy="25.6" r="6.8" fill="#2b3260"/>
<circle cx="2113" cy="22.8" r="2.6" fill="#5f5f63"/>
<path d="M2108.2 30 Q2113 24.6 2117.8 30 Q2113 32.6 2108.2 30Z" fill="#5f5f63"/>
<path d="M2354 15.2 L2361 22.2 L2368 15.2" fill="none" stroke="#5f5f63" stroke-width="2.6"/>

<path d="M2456.90 2.00 L2458.47 2.08 L2459.44 5.25 L2460.44 6.33 L2461.57 6.73 L2462.65 7.24 L2464.12 7.19 L2467.05 5.63 L2468.21 6.69 L2469.27 7.85 L2467.71 10.78 L2467.66 12.25 L2468.17 13.33 L2468.57 14.46 L2469.65 15.46 L2472.82 16.43 L2472.90 18.00 L2472.82 19.57 L2469.65 20.54 L2468.57 21.54 L2468.17 22.67 L2467.66 23.75 L2467.71 25.22 L2469.27 28.15 L2468.21 29.31 L2467.05 30.37 L2464.12 28.81 L2462.65 28.76 L2461.57 29.27 L2460.44 29.67 L2459.44 30.75 L2458.47 33.92 L2456.90 34.00 L2455.33 33.92 L2454.36 30.75 L2453.36 29.67 L2452.23 29.27 L2451.15 28.76 L2449.68 28.81 L2446.75 30.37 L2445.59 29.31 L2444.53 28.15 L2446.09 25.22 L2446.14 23.75 L2445.63 22.67 L2445.23 21.54 L2444.15 20.54 L2440.98 19.57 L2440.90 18.00 L2440.98 16.43 L2444.15 15.46 L2445.23 14.46 L2445.63 13.33 L2446.14 12.25 L2446.09 10.78 L2444.53 7.85 L2445.59 6.69 L2446.75 5.63 L2449.68 7.19 L2451.15 7.24 L2452.23 6.73 L2453.36 6.33 L2454.36 5.25 L2455.33 2.08Z" fill="#5f5f63" stroke="#5f5f63" stroke-width="1" stroke-linejoin="round"/>
<circle cx="2456.9" cy="18" r="6" fill="#2b3260"/>
</svg>
<script>(function(){var s=window.innerWidth/2552;if(Math.abs(s-1)>0.01){document.documentElement.style.zoom=s;}})();</script>
</body></html>
